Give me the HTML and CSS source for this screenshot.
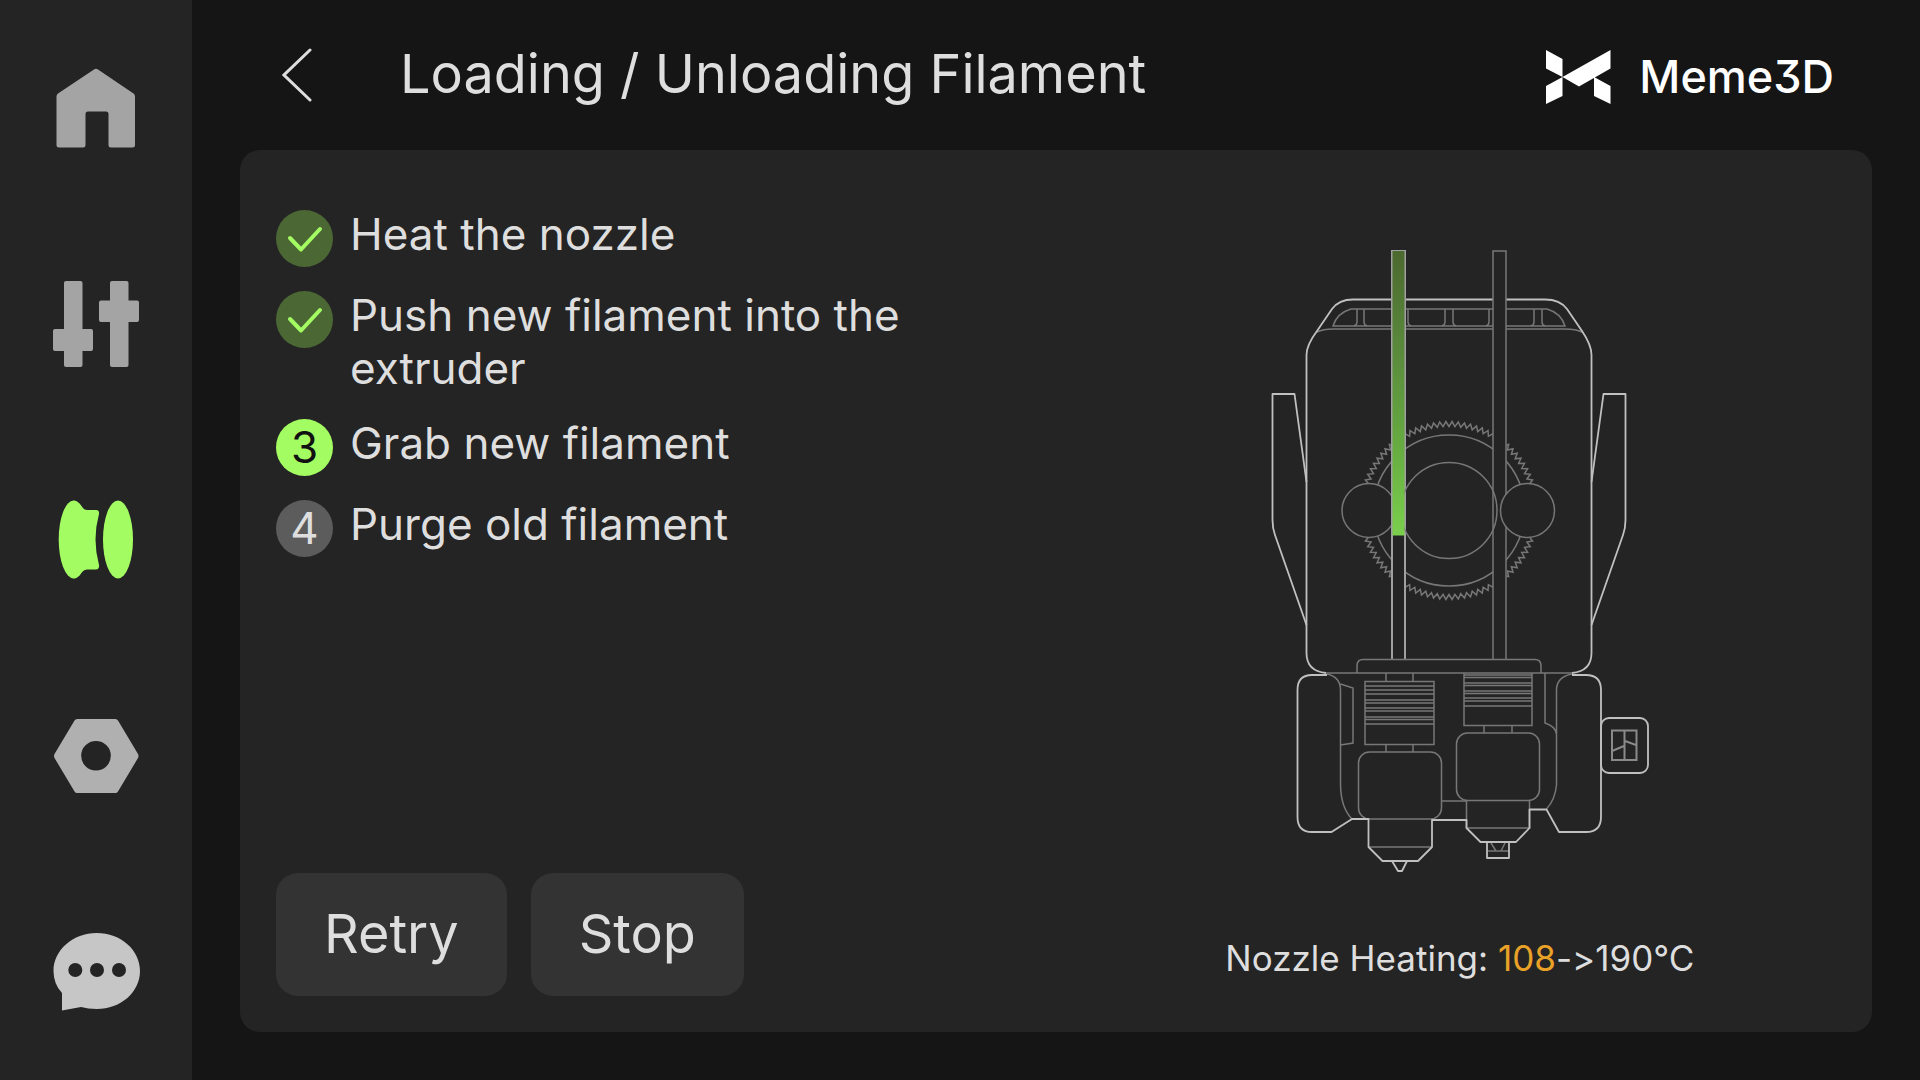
FILE: index.html
```html
<!DOCTYPE html>
<html lang="en">
<head>
<meta charset="utf-8">
<meta name="viewport" content="width=device-width, initial-scale=1">
<title>Loading / Unloading Filament</title>
<link rel="stylesheet" href="styles.css">
</head>
<body>
<nav class="sidebar" aria-label="Main">
  <a class="nav-item" href="#home" aria-label="Home">
    <svg class="nav-icon" viewBox="0 0 88 88"><path d="M42 5.500Q44 4 46 5.500L81.500 29.500Q83 30.500 83 32.500V81Q83 83.500 80.500 83.500H59Q56.500 83.500 56.500 81V50Q56.500 47.500 54 47.500H36Q33.500 47.500 33.500 50V81Q33.500 83.500 31 83.500H7Q4.500 83.500 4.500 81V32.500Q4.500 30.500 6 29.500Z"/></svg>
  </a>
  <a class="nav-item" href="#controls" aria-label="Controls">
    <svg class="nav-icon" viewBox="0 0 88 88"><rect x="12" y="1" width="18.500" height="86" rx="2"/><rect x="1" y="49" width="40" height="22" rx="2"/><rect x="58" y="1" width="18.500" height="86" rx="2"/><rect x="47" y="20.500" width="40" height="21.500" rx="2"/></svg>
  </a>
  <a class="nav-item active" href="#filament" aria-label="Filament" aria-current="page">
    <svg class="nav-icon" viewBox="0 0 88 88"><ellipse cx="21.700" cy="43.500" rx="15" ry="39"/><ellipse cx="66" cy="43.500" rx="15" ry="39"/><path d="M21.700 4.500Q26 5 30 11Q32 14 35 14H44Q47.500 14 47 18Q40 43.500 47 69Q47.500 73.500 44 73.500H35Q32 73.500 30 76Q26 82 21.700 82.500Z"/></svg>
  </a>
  <a class="nav-item settings" href="#settings" aria-label="Settings">
    <svg class="nav-icon" viewBox="0 0 88 88"><path fill-rule="evenodd" d="M25 7H63.500Q65 7 66 8.500L86 42Q87 44 86 46L66 79.500Q65 81 63.500 81H25Q23.500 81 22.500 79.500L2.500 46Q1.500 44 2.500 42L22.500 8.500Q23.500 7 25 7ZM44 29A14.800 14.800 0 1 0 44 58.600A14.800 14.800 0 1 0 44 29Z"/></svg>
  </a>
  <a class="nav-item messages" href="#messages" aria-label="Messages">
    <svg class="nav-icon" viewBox="0 0 88 88"><path fill-rule="evenodd" d="M44.700 5C69 5 88 22 88 43S69 81 44.700 81Q36 81 29 79L10 82.500V65Q1.500 56 1.500 43C1.500 22 21 5 44.700 5ZM23.300 35A7 7 0 1 0 23.300 49A7 7 0 1 0 23.300 35ZM45 35A7 7 0 1 0 45 49A7 7 0 1 0 45 35ZM67 35A7 7 0 1 0 67 49A7 7 0 1 0 67 35Z"/></svg>
  </a>
</nav>

<div class="screen">
  <header class="topbar">
    <a class="back" href="#back" aria-label="Back"><svg class="back-icon" viewBox="0 0 30 54"><path d="M28 2L2 27L28 52"/></svg></a>
    <h1 class="title">Loading / Unloading Filament</h1>
    <div class="brand">
      <svg class="brand-mark" viewBox="0 0 65 54" aria-hidden="true"><path d="M0 0L16.500 9V27L0 18.500ZM0 36L16.500 27V46L0 54ZM64.500 0V18.500L33 36.500L16.500 27ZM48 27L64.500 36V54L48 46Z"/></svg>
      <span class="brand-name">Meme3D</span>
    </div>
  </header>

  <main class="panel">
    <section class="procedure">
      <ol class="steps">
        <li class="step done"><span class="badge"><svg class="check" viewBox="0 0 36 36" role="img" aria-label="Done"><path d="M3 17L14 28.500L33 8"/></svg></span><span class="step-text">Heat the nozzle</span></li>
        <li class="step done"><span class="badge"><svg class="check" viewBox="0 0 36 36" role="img" aria-label="Done"><path d="M3 17L14 28.500L33 8"/></svg></span><span class="step-text">Push new filament into the extruder</span></li>
        <li class="step current" aria-current="step"><span class="badge">3</span><span class="step-text">Grab new filament</span></li>
        <li class="step"><span class="badge">4</span><span class="step-text">Purge old filament</span></li>
      </ol>
      <div class="actions">
        <button class="btn" type="button">Retry</button>
        <button class="btn" type="button">Stop</button>
      </div>
    </section>

    <figure class="toolhead">
      <svg class="diagram" viewBox="1268 244 386 632" role="img" aria-label="Dual extruder tool head">
        <defs>
          <linearGradient id="feed" x1="0" y1="0" x2="0" y2="1"><stop offset="0" stop-color="#4c692f"/><stop offset=".35" stop-color="#5a8a3c"/><stop offset=".7" stop-color="#67ad41"/><stop offset="1" stop-color="#7bd04d"/></linearGradient>
        </defs>
        <!-- vent grille -->
        <g class="dim">
          <path d="M1318 332Q1324 329 1334 329H1566Q1577 329 1583 332"/>
          <path d="M1352 309H1548Q1562 313 1566 326H1334Q1338 313 1352 309Z"/>
          <path d="M1358 309V322Q1358 325 1355 326M1365 309V322Q1365 325 1368 326M1409 309V322Q1409 325 1412 326M1446 309V322Q1446 325 1443 326M1454 309V322Q1454 325 1457 326M1490 309V322Q1490 325 1487 326M1535 309V322Q1535 325 1532 326M1543 309V322Q1543 325 1546 326"/>
        </g>
        <!-- hood and side wings -->
        <g class="edge">
          <path d="M1327 673Q1307.500 671 1307.500 653V355Q1307.500 345 1318 331L1333 309Q1340 299.500 1354 299.500H1546Q1561 299.500 1568 309L1583 331Q1592.500 345 1592.500 355V653Q1592.500 671 1573 673"/>
          <path d="M1307.500 482L1295.500 394H1273.500V520Q1273.500 528 1276 535L1307.500 625M1592.500 482L1604.500 394H1626.500V520Q1626.500 528 1624 535L1592.500 625"/>
        </g>
        <!-- drive gears and filament tubes -->
        <g class="dim">
          <path id="gear"/>
          <circle cx="1450" cy="510.500" r="75.500"/>
          <circle class="solid" cx="1370" cy="510.500" r="27"/>
        </g>
        <path class="tube-left" d="M1393 659V251H1406V659"/>
        <path class="tube-right" d="M1494 659V251H1507V659"/>
        <g class="dim"><circle class="solid" cx="1528.500" cy="510.500" r="27"/><circle cx="1450" cy="510.500" r="48"/></g>
        <rect x="1393.500" y="251" width="12" height="284.500" fill="url(#feed)"/>
        <!-- base plate and hot ends -->
        <g class="dim">
          <path d="M1327 673H1573M1358 673V666Q1358 659.500 1364 659.500H1536Q1542 659.500 1542 666V673"/>
          <path d="M1328 674Q1341.500 677 1341.500 690V785Q1342 808 1353 819M1341.500 684L1354 688V743L1341.500 745"/>
          <path d="M1387 673V681M1414 673V681M1387 745V752M1414 745V752"/>
          <path d="M1366 681.500H1435V744.500H1366ZM1366 686H1435M1366 690H1435M1366 694H1435M1366 700H1435M1366 703H1435M1366 708H1435M1366 711H1435M1366 717H1435M1366 719.500H1435M1366 724H1435"/>
          <rect x="1359.500" y="752" width="83" height="67" rx="11"/>
          <path d="M1369 847H1433M1442 801H1467"/>
          <path d="M1465 673V725.500H1533V673M1465 675H1533M1465 677.500H1533M1465 683H1533M1465 685.500H1533M1465 691H1533M1465 693.500H1533M1465 698H1533M1465 701H1533M1465 706H1533"/>
          <path d="M1485 725V733M1513 725V733"/>
          <rect x="1457.500" y="733" width="83" height="67.500" rx="11"/>
          <path d="M1467.500 800V828H1530.500V800M1492 843L1497 851M1506 843L1502 851M1488 851H1510"/>
          <path d="M1573 674Q1557.500 677 1557.500 690V785Q1556 800 1547.500 809M1546 673V723Q1556 726 1557.500 734"/>
        </g>
        <g class="edge">
          <path d="M1328 675H1313Q1298.500 675 1298.500 690V817Q1298.500 832 1313 832H1332.500L1353 819H1369.500V847L1383.500 861H1419L1433 847V820H1467.500V828L1481.500 842H1517L1530.500 828V809.500H1547.500L1560 832H1587Q1602 832 1602 817V690Q1602 675 1587 675H1573"/>
          <path d="M1393 861L1399 871H1403L1408 861M1488 842V858H1510V842"/>
          <rect x="1602" y="718" width="47" height="55" rx="8"/>
        </g>
        <path class="latch" d="M1613 730.500H1637.500V760H1613ZM1625.500 730V760M1613 751L1625 746M1626 741L1637 745"/>
      </svg>
      <figcaption class="status">Nozzle Heating: <span class="now">108</span>-&gt;190℃</figcaption>
    </figure>
  </main>
</div>
<script src="gear.js"></script>
</body>
</html>
```
FILE: styles.css
```css
* { box-sizing: border-box; }

body {
  margin: 0;
  min-height: 100vh;
  display: flex;
  background: #151515;
  color: #dedede;
  font-family: Inter, "Noto Sans", sans-serif;
  font-feature-settings: "calt" 0;
}

.sidebar {
  flex: 0 0 10%;
  display: flex;
  flex-direction: column;
  background: #242424;
}
.nav-item {
  flex: 1;
  display: flex;
  align-items: center;
  justify-content: center;
  color: #a4a4a4;
}
.nav-item.active { color: #a3fc61; }
.nav-item.settings { color: #b0b0b0; }
.nav-item.messages { color: #c6c6c6; }
.nav-icon { width: 88px; height: 88px; fill: currentColor; }

.screen {
  flex: 1;
  min-width: 0;
  display: flex;
  flex-direction: column;
  padding: 0 48px 48px;
}

.topbar {
  height: 150px;
  display: flex;
  align-items: center;
  padding: 0 38px 0 42px;
}
.back { display: flex; color: inherit; }
.back-icon {
  width: 30px;
  height: 54px;
  fill: none;
  stroke: currentColor;
  stroke-width: 3;
  stroke-linecap: round;
}
.title {
  margin: 0 auto 0 88px;
  padding-bottom: 2px;
  font-size: 54px;
  line-height: 64px;
  font-weight: 400;
}
.brand {
  display: flex;
  align-items: center;
  gap: 28px;
  padding-top: 4px;
  color: #fff;
}
.brand-mark { width: 65px; height: 54px; fill: currentColor; }
.brand-name {
  font-size: 45px;
  line-height: 54px;
  font-weight: 500;
  font-feature-settings: "cv09";
}

.panel {
  flex: 1;
  display: grid;
  grid-template-columns: 98fr 100fr;
  border-radius: 20px;
  background: #242424;
}

.procedure {
  display: flex;
  flex-direction: column;
  justify-content: space-between;
  padding: 58px 0 36px 36px;
}
.steps {
  display: flex;
  flex-direction: column;
  gap: 22px;
  max-width: 640px;
  margin: 0;
  padding: 0;
  list-style: none;
}
.step { display: flex; align-items: flex-start; gap: 17px; }
.step-text { font-size: 44px; line-height: 53px; }
.badge {
  flex: none;
  display: flex;
  align-items: center;
  justify-content: center;
  width: 57px;
  height: 57px;
  margin-top: 2px;
  border-radius: 50%;
  background: #5c5c5c;
  font-size: 44px;
  line-height: 53px;
}
.done .badge { background: #4b6734; }
.current .badge { background: #a3fc61; color: #111; }
.check {
  width: 36px;
  height: 36px;
  fill: none;
  stroke: #a3fc61;
  stroke-width: 4;
  stroke-linecap: round;
  stroke-linejoin: round;
}

.actions { display: flex; gap: 24px; }
.btn {
  height: 123px;
  padding: 0 48px 2px;
  border: 0;
  border-radius: 22px;
  background: #333;
  color: inherit;
  font-family: inherit;
  font-size: 54px;
  line-height: 64px;
}

.toolhead {
  display: flex;
  flex-direction: column;
  align-items: center;
  justify-content: flex-end;
  gap: 60px;
  margin: 0;
  padding: 60px 0 52px;
}
.diagram { width: 386px; height: 632px; fill: none; }
.dim { stroke: #777; stroke-width: 1.5; }
.edge { stroke: #c0c0c0; stroke-width: 1.8; stroke-linejoin: round; }
.solid { fill: #242424; }
.tube-left { fill: #242424; stroke: #a0a0a0; stroke-width: 2; }
.tube-right { fill: #242424; stroke: #777; stroke-width: 1.5; }
.latch { stroke: #8a8a8a; stroke-width: 2; }

.status { font-size: 35px; line-height: 44px; }
.now { color: #e9a227; }
```
FILE: gear.js
```js
// Builds the toothed rim of the drive gear.
const teeth = 90;
const points = [];
for (let i = 0; i < teeth * 2; i++) {
  const angle = (i * Math.PI) / teeth;
  const radius = i % 2 ? 84 : 89;
  points.push((1450 + radius * Math.cos(angle)).toFixed(1) + ' ' + (510.5 + radius * Math.sin(angle)).toFixed(1));
}
document.getElementById('gear').setAttribute('d', 'M' + points.join('L') + 'Z');
```
